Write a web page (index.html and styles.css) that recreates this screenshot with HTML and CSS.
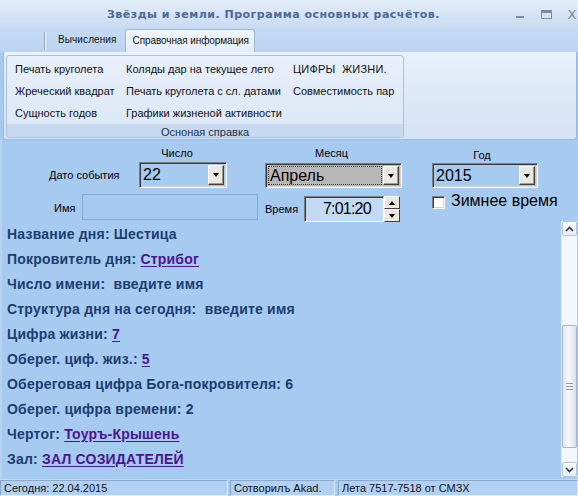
FILE: index.html
```html
<!DOCTYPE html>
<html lang="ru">
<head>
<meta charset="utf-8">
<title>Звёзды и земли</title>
<link rel="stylesheet" href="styles.css">
</head>
<body>
<div class="window">
  <div class="titlebar">
    <div class="title">Звёзды и земли. Программа основных расчётов.</div>
    <div class="wbtns">
      <span class="wb wb-min"></span>
      <span class="wb wb-max"></span>
      <span class="wb wb-close">X</span>
    </div>
  </div>

  <div class="tabs">
    <span class="tab-sep"></span>
    <div class="tab">Вычисления</div>
    <div class="tab tab-active">Справочная информация</div>
  </div>

  <div class="ribbon">
    <div class="group">
      <div class="group-body">
        <div class="gcol gcol-1">
          <div class="rb">Печать круголета</div>
          <div class="rb">Жреческий квадрат</div>
          <div class="rb">Сущность годов</div>
        </div>
        <div class="gcol gcol-2">
          <div class="rb">Коляды дар на текущее лето</div>
          <div class="rb">Печать круголета с сл. датами</div>
          <div class="rb">Графики жизненой активности</div>
        </div>
        <div class="gcol gcol-3">
          <div class="rb rb-wide">ЦИФРЫ &nbsp;ЖИЗНИ.</div>
          <div class="rb">Совместимость пар</div>
        </div>
      </div>
      <div class="group-label">Осноная справка</div>
    </div>
  </div>

  <div class="main">
    <div class="form">
      <div class="row row-a">
        <div class="lbl lbl-date">Дато события</div>
        <div class="field field-day">
          <div class="cap">Число</div>
          <div class="combo">
            <span class="combo-text">22</span>
            <span class="dd"><span class="tri-down"></span></span>
          </div>
        </div>
        <div class="field field-month">
          <div class="cap">Месяц</div>
          <div class="combo combo-focus">
            <span class="combo-text"><span class="focus-rect">Апрель</span></span>
            <span class="dd"><span class="tri-down"></span></span>
          </div>
        </div>
        <div class="field field-year">
          <div class="cap cap-year">Год</div>
          <div class="combo">
            <span class="combo-text">2015</span>
            <span class="dd"><span class="tri-down"></span></span>
          </div>
        </div>
      </div>
      <div class="row row-b">
        <div class="lbl lbl-name">Имя</div>
        <div class="name-input"></div>
        <div class="lbl lbl-time">Время</div>
        <div class="time-box">
          <span class="time-text">7:01:20</span>
        </div>
        <div class="spin">
          <span class="spin-btn"><span class="tri-up"></span></span>
          <span class="spin-btn"><span class="tri-down"></span></span>
        </div>
        <div class="check">
          <span class="check-box"></span>
          <span class="check-label">Зимнее время</span>
        </div>
      </div>
    </div>

    <div class="info">
      <div class="lines">
        <div class="line">Название дня: Шестица</div>
        <div class="line">Покровитель дня: <a class="lnk">Стрибог</a></div>
        <div class="line">Число имени:  введите имя</div>
        <div class="line">Структура дня на сегодня:  введите имя</div>
        <div class="line">Цифра жизни: <a class="lnk">7</a></div>
        <div class="line">Оберег. циф. жиз.: <a class="lnk">5</a></div>
        <div class="line">Обереговая цифра Бога-покровителя: 6</div>
        <div class="line">Оберег. цифра времени: 2</div>
        <div class="line">Чертог: <a class="lnk">Тоуръ-Крышень</a></div>
        <div class="line">Зал: <a class="lnk">ЗАЛ СОЗИДАТЕЛЕЙ</a></div>
      </div>
      <div class="vscroll">
        <div class="sb-btn">
          <svg width="9" height="6" viewBox="0 0 9 6"><path d="M1 5 L4.5 1.5 L8 5" fill="none" stroke="#2a3a55" stroke-width="1.6"/></svg>
        </div>
        <div class="sb-track">
          <div class="sb-space-top"></div>
          <div class="sb-thumb"><span class="grip"></span></div>
        </div>
        <div class="sb-btn">
          <svg width="9" height="6" viewBox="0 0 9 6"><path d="M1 1 L4.5 4.5 L8 1" fill="none" stroke="#2a3a55" stroke-width="1.6"/></svg>
        </div>
      </div>
    </div>
  </div>

  <div class="status">
    <div class="sp sp-1">Сегодня: 22.04.2015</div>
    <div class="sp sp-2">Сотворилъ Akad.</div>
    <div class="sp sp-3">Лета 7517-7518 от СМЗХ</div>
  </div>
</div>
</body>
</html>
```

FILE: styles.css
```css
html, body {
  margin: 0;
  padding: 0;
}
body {
  width: 578px;
  height: 496px;
  overflow: hidden;
  background: #a6caf0;
  font-family: "Liberation Sans", Arial, sans-serif;
  font-size: 11px;
  color: #000;
}
.window {
  width: 578px;
  height: 496px;
  display: flex;
  flex-direction: column;
}

/* title bar */
.titlebar {
  height: 28px;
  flex: none;
  display: flex;
  align-items: center;
  background: linear-gradient(#e4eefa, #d3e2f5 60%, #c9dbf2);
  overflow: hidden;
}
.title {
  flex: 1;
  text-align: center;
  font-family: "DejaVu Sans", sans-serif;
  font-weight: bold;
  font-size: 11px;
  letter-spacing: 0.5px;
  color: #4b6a96;
  padding-left: 40px;
  padding-top: 1px;
  white-space: nowrap;
}
.wbtns {
  display: flex;
  align-items: center;
  width: 78px;
  margin-right: -7px;
  height: 28px;
}
.wb {
  width: 26px;
  display: flex;
  justify-content: center;
  align-items: center;
  color: #7b8ba3;
  font-family: "DejaVu Sans", sans-serif;
  font-size: 12px;
}
.wb-min::before {
  content: "";
  width: 8px;
  height: 2px;
  background: #7b8ba3;
  margin-top: 5px;
}
.wb-max::before {
  content: "";
  width: 9px;
  height: 5px;
  border: 1px solid #7b8ba3;
  border-top-width: 3px;
}
.wb-close {
  font-size: 13px;
}

/* tabs */
.tabs {
  height: 24px;
  flex: none;
  display: flex;
  align-items: flex-end;
  background: linear-gradient(#c5daf4, #bcd4f1);
  padding-left: 44px;
  box-sizing: border-box;
}
.tab-sep {
  width: 1px;
  height: 18px;
  margin-bottom: 2px;
  background: #9aa8ba;
  box-shadow: 1px 0 0 #eef4fb;
}
.tab {
  height: 23px;
  line-height: 22px;
  padding: 0 8px 0 13px;
  box-sizing: border-box;
  font-size: 10px;
  letter-spacing: 0.1px;
  color: #111;
}
.tab-active {
  padding: 0 5px 0 7px;
  letter-spacing: -0.1px;
  background: linear-gradient(#f2f7fd, #e3edf9);
  border: 1px solid #9fb8d9;
  border-bottom: none;
  border-radius: 3px 3px 0 0;
}

/* ribbon */
.ribbon {
  height: 88px;
  flex: none;
  box-sizing: border-box;
  margin: 0 1px 0 3px;
  padding: 3px 2px 1px 2px;
  background: linear-gradient(#e9f1fa, #dde9f7 50%, #d4e3f5);
  border: 1px solid #9dbbdf;
  border-top: none;
  border-radius: 0 0 3px 3px;
}
.group {
  width: 398px;
  height: 83px;
  box-sizing: border-box;
  border: 1px solid #a9c2df;
  border-radius: 3px;
  background: linear-gradient(#e8f0fa, #dbe7f6);
  display: flex;
  flex-direction: column;
  overflow: hidden;
}
.group-body {
  flex: 1;
  display: flex;
  padding-left: 8px;
  padding-top: 2px;
}
.gcol {
  display: flex;
  flex-direction: column;
}
.gcol-1 { width: 111px; }
.gcol-2 { width: 167px; }
.rb {
  height: 22px;
  line-height: 22px;
  white-space: nowrap;
  color: #111;
}
.rb-wide {
  letter-spacing: 0.2px;
}
.group-label {
  height: 17px;
  line-height: 16px;
  text-align: center;
  background: #c6d9f0;
  color: #1b2f4e;
}

/* main */
.main {
  flex: 1;
  display: flex;
  flex-direction: column;
  background: #a6caf0;
  border-left: 2px solid #b7d2f1;
  min-height: 0;
}
.form {
  height: 80px;
  flex: none;
  padding-top: 6px;
  box-sizing: border-box;
}
.row {
  display: flex;
}
.row-a {
  align-items: flex-end;
}
.lbl {
  font-size: 11px;
  white-space: nowrap;
}
.lbl-date {
  margin-left: 47px;
  width: 90px;
  height: 26px;
  line-height: 26px;
}
.field {
  display: flex;
  flex-direction: column;
}
.cap {
  height: 14px;
  line-height: 14px;
  margin-bottom: 2px;
  text-align: center;
}
.cap-year {
  margin-bottom: 1px;
  height: 16px;
  line-height: 18px;
  padding-right: 6px;
}
.field-day { width: 88px; }
.field-day .cap { margin-left: -12px; }
.field-month { width: 137px; margin-left: 38px; }
.field-month .cap { margin-left: -4px; }
.field-year { width: 106px; margin-left: 30px; }
.field-month .combo { margin-top: 1px; height: 25px; }
.field-year .combo { height: 25px; }

.combo {
  height: 26px;
  box-sizing: border-box;
  border: 1px solid;
  border-color: #7d7d7d #ffffff #ffffff #7d7d7d;
  box-shadow: inset 1px 1px 0 #3c3c3c, inset -1px -1px 0 #d6d3ce;
  background: #a6caf0;
  display: flex;
  align-items: stretch;
  padding: 2px;
}
.combo-text {
  flex: 1;
  font-family: "Liberation Sans", Arial, sans-serif;
  font-size: 16px;
  line-height: 20px;
  padding-left: 1px;
  display: flex;
  align-items: center;
}
.combo-focus {
  background: #b8b8b8;
}
.combo-focus .combo-text {
  padding-left: 0;
}
.focus-rect {
  display: block;
  width: 114px;
  height: 19px;
  line-height: 19px;
  padding-left: 2px;
  box-sizing: border-box;
  outline: 1px dotted #333;
  outline-offset: -1px;
}
.dd {
  width: 16px;
  flex: none;
  background: #ece9e3;
  border: 1px solid;
  border-color: #ffffff #404040 #404040 #ffffff;
  box-shadow: inset -1px -1px 0 #9d9a94;
  box-sizing: border-box;
  display: flex;
  align-items: center;
  justify-content: center;
}
.tri-down {
  width: 0;
  height: 0;
  border-left: 3.5px solid transparent;
  border-right: 3.5px solid transparent;
  border-top: 4px solid #000;
}
.tri-up {
  width: 0;
  height: 0;
  border-left: 3.5px solid transparent;
  border-right: 3.5px solid transparent;
  border-bottom: 4px solid #000;
}

.row-b {
  margin-top: 6px;
  align-items: flex-start;
}
.lbl-name {
  margin-left: 52px;
  width: 28px;
  line-height: 28px;
}
.name-input {
  width: 176px;
  height: 26px;
  box-sizing: border-box;
  border: 1px solid #84aad6;
  background: #a6caf0;
}
.lbl-time {
  margin-left: 7px;
  width: 39px;
  line-height: 30px;
}
.time-box {
  margin-top: 2px;
  width: 80px;
  height: 26px;
  box-sizing: border-box;
  border: 1px solid;
  border-color: #7d7d7d #ffffff #ffffff #7d7d7d;
  box-shadow: inset 1px 1px 0 #3c3c3c;
  background: #c3daf4;
  display: flex;
  align-items: center;
}
.time-text {
  padding-left: 18px;
  font-size: 16px;
  letter-spacing: -0.8px;
}
.spin {
  margin-top: 2px;
  width: 16px;
  height: 26px;
  display: flex;
  flex-direction: column;
}
.spin-btn {
  flex: 1;
  background: #ece9e3;
  border: 1px solid;
  border-color: #ffffff #404040 #404040 #ffffff;
  box-sizing: border-box;
  display: flex;
  align-items: center;
  justify-content: center;
}
.check {
  margin-left: 32px;
  display: flex;
  align-items: flex-start;
}
.check-box {
  width: 13px;
  height: 13px;
  margin-top: 2px;
  box-sizing: border-box;
  background: #fff;
  border: 1px solid;
  border-color: #7d7d7d #ffffff #ffffff #7d7d7d;
  box-shadow: inset 1px 1px 0 #3c3c3c, inset -1px -1px 0 #d6d3ce;
}
.check-label {
  margin-left: 6px;
  font-size: 16px;
  line-height: 14px;
}

/* info */
.info {
  flex: 1;
  display: flex;
  min-height: 0;
}
.lines {
  flex: 1;
  padding-top: 2px;
  padding-left: 5px;
}
.line {
  height: 25px;
  line-height: 25px;
  font-family: "Liberation Sans", Arial, sans-serif;
  font-weight: bold;
  font-size: 14px;
  letter-spacing: 0.2px;
  color: #1b3d6f;
  white-space: pre;
}
.lnk {
  color: #4d1490;
  text-decoration: underline;
  text-underline-offset: 2px;
}
.vscroll {
  width: 15px;
  margin: 1px 1px 2px 0;
  display: flex;
  flex-direction: column;
  background: #f4f7fc;
  border-left: 1px solid #e3eaf4;
}
.sb-btn {
  height: 15px;
  flex: none;
  box-sizing: border-box;
  border: 1px solid #b6c6da;
  border-radius: 2px;
  background: linear-gradient(#ffffff, #e6edf6);
  display: flex;
  align-items: center;
  justify-content: center;
}
.sb-track {
  flex: 1;
  display: flex;
  flex-direction: column;
  padding-bottom: 14px;
}
.sb-space-top {
  height: 89px;
}
.sb-thumb {
  flex: 1;
  box-sizing: border-box;
  border: 1px solid #a9b6c8;
  border-radius: 2px;
  background: linear-gradient(90deg, #e2e7ef, #f7f9fc 45%, #d9dfe9);
  display: flex;
  align-items: center;
  justify-content: center;
}
.grip {
  width: 7px;
  height: 5px;
  border-top: 1px solid #8a97aa;
  border-bottom: 1px solid #8a97aa;
  position: relative;
}
.grip::after {
  content: "";
  position: absolute;
  left: 0;
  right: 0;
  top: 2px;
  height: 1px;
  background: #8a97aa;
}

/* status */
.status {
  height: 17px;
  flex: none;
  display: flex;
  background: #a6caf0;
  border-top: 1px solid #c6dbf3;
  box-sizing: border-box;
}
.sp {
  height: 16px;
  box-sizing: border-box;
  line-height: 14px;
  padding-left: 3px;
  font-size: 11px;
  color: #111;
  white-space: nowrap;
  border: 1px solid;
  border-color: #8aa7cd #e2eefb #e2eefb #8aa7cd;
  background: #b2d0f1;
}
.sp-1 { width: 228px; }
.sp-2 { width: 105px; margin-left: 2px; }
.sp-3 { flex: 1; margin-left: 3px; }
```
